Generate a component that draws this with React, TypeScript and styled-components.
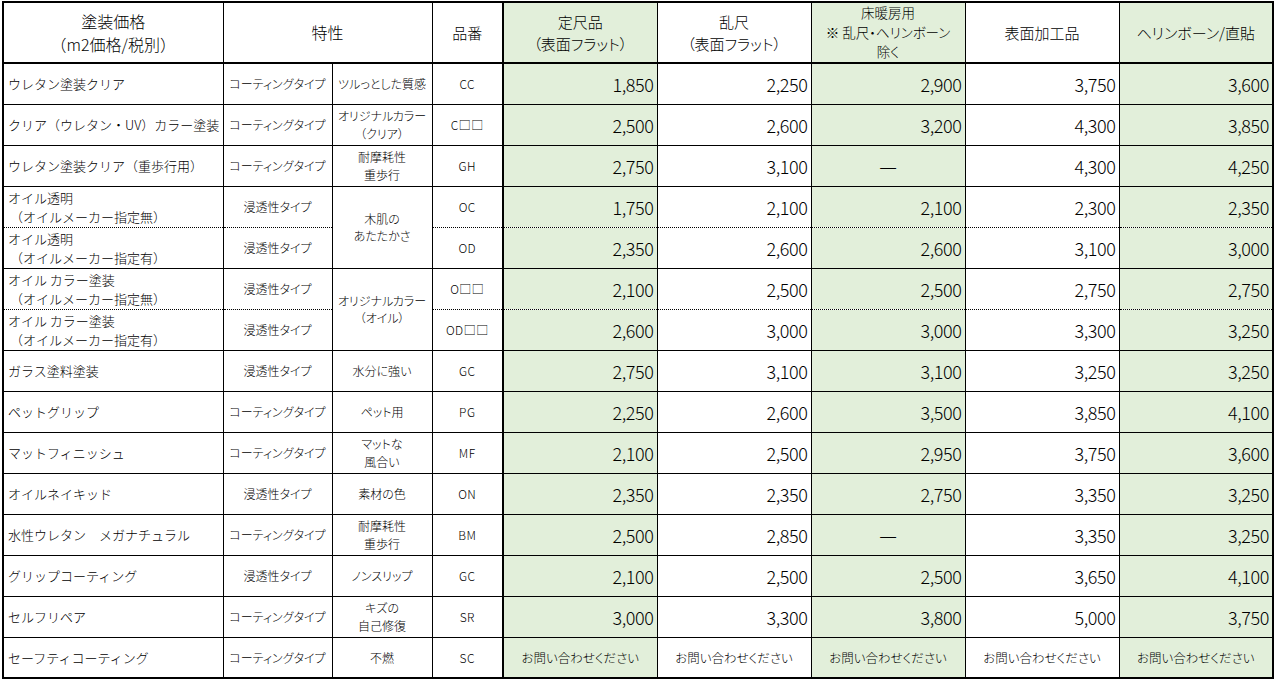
import React from "react";
import styled, { createGlobalStyle } from "styled-components";

const Global = createGlobalStyle`
  html, body { margin: 0; padding: 0; background: #ffffff; }
  body { font-family: "Noto Sans CJK JP", "Noto Sans", sans-serif; color: #000; }
`;

const GREEN = "#e2efda";

const Page = styled.div`
  padding: 1px 0 0 2px;
`;

const Table = styled.table`
  border-collapse: collapse;
  table-layout: fixed;
  width: 1270px;
  border: 2px solid #000;
  font-weight: 300;
`;

const Row = styled.tr`
  height: 41px;
`;

const HeadRow = styled.tr`
  height: 61px;
`;

const Cell = styled.td<{ $green?: boolean; $dotted?: boolean; $thickLeft?: boolean }>`
  border-right: 1px solid #000;
  border-bottom: 1px ${(p) => (p.$dotted ? "dotted" : "solid")} #000;
  ${(p) => (p.$thickLeft ? "border-left: 2px solid #000;" : "")}
  background: ${(p) => (p.$green ? GREEN : "#ffffff")};
  padding: 0 3px;
  vertical-align: middle;
  white-space: nowrap;
  overflow: hidden;
`;

const HeadCell = styled(Cell).attrs({ as: "th" })<{ $small?: boolean; $wide?: boolean }>`
  border-bottom: 2px solid #000;
  font-weight: 300;
  text-align: center;
  font-size: ${(p) => (p.$small ? "13.5px" : p.$wide ? "16px" : "15px")};
  line-height: ${(p) => (p.$small ? "19.5px" : p.$wide ? "23px" : "22px")};
  font-feature-settings: ${(p) => (p.$wide ? "normal" : '"palt"')};
`;

const NameCell = styled(Cell)`
  text-align: left;
  font-size: 13px;
  line-height: 19px;
  padding-left: 4px;
`;

const TypeCell = styled(Cell)`
  text-align: center;
  font-size: 12px;
  line-height: 17.5px;
  font-feature-settings: "palt";
`;

const CodeCell = styled(Cell)`
  text-align: center;
  font-size: 12px;
  letter-spacing: 0.5px;
`;

const PriceCell = styled(Cell)`
  text-align: right;
  font-size: 18px;
  padding-right: 3px;
  letter-spacing: -0.4px;
`;

const DashCell = styled(Cell)`
  text-align: center;
  font-size: 20px;
`;

const InquiryCell = styled(Cell)`
  text-align: center;
  font-size: 12.5px;
  font-feature-settings: "palt";
`;

const Line = styled.div``;

const Indent = styled.div`
  padding-left: 2px;
`;

type Price = number | null | "ask";

interface RowData {
  name: string[];
  type: string;
  feature?: string[];
  featureSpan?: number;
  code: string;
  prices: Price[];
  dotted?: boolean;
}

const rows: RowData[] = [
  { name: ["ウレタン塗装クリア"], type: "コーティングタイプ", feature: ["ツルっとした質感"], code: "CC", prices: [1850, 2250, 2900, 3750, 3600] },
  { name: ["クリア（ウレタン・UV）カラー塗装"], type: "コーティングタイプ", feature: ["オリジナルカラー", "（クリア）"], code: "C□□", prices: [2500, 2600, 3200, 4300, 3850] },
  { name: ["ウレタン塗装クリア（重歩行用）"], type: "コーティングタイプ", feature: ["耐摩耗性", "重歩行"], code: "GH", prices: [2750, 3100, null, 4300, 4250] },
  { name: ["オイル透明", "（オイルメーカー指定無）"], type: "浸透性タイプ", feature: ["木肌の", "あたたかさ"], featureSpan: 2, code: "OC", prices: [1750, 2100, 2100, 2300, 2350], dotted: true },
  { name: ["オイル透明", "（オイルメーカー指定有）"], type: "浸透性タイプ", code: "OD", prices: [2350, 2600, 2600, 3100, 3000] },
  { name: ["オイル カラー塗装", "（オイルメーカー指定無）"], type: "浸透性タイプ", feature: ["オリジナルカラー", "（オイル）"], featureSpan: 2, code: "O□□", prices: [2100, 2500, 2500, 2750, 2750], dotted: true },
  { name: ["オイル カラー塗装", "（オイルメーカー指定有）"], type: "浸透性タイプ", code: "OD□□", prices: [2600, 3000, 3000, 3300, 3250] },
  { name: ["ガラス塗料塗装"], type: "浸透性タイプ", feature: ["水分に強い"], code: "GC", prices: [2750, 3100, 3100, 3250, 3250] },
  { name: ["ペットグリップ"], type: "コーティングタイプ", feature: ["ペット用"], code: "PG", prices: [2250, 2600, 3500, 3850, 4100] },
  { name: ["マットフィニッシュ"], type: "コーティングタイプ", feature: ["マットな", "風合い"], code: "MF", prices: [2100, 2500, 2950, 3750, 3600] },
  { name: ["オイルネイキッド"], type: "浸透性タイプ", feature: ["素材の色"], code: "ON", prices: [2350, 2350, 2750, 3350, 3250] },
  { name: ["水性ウレタン　メガナチュラル"], type: "コーティングタイプ", feature: ["耐摩耗性", "重歩行"], code: "BM", prices: [2500, 2850, null, 3350, 3250] },
  { name: ["グリップコーティング"], type: "浸透性タイプ", feature: ["ノンスリップ"], code: "GC", prices: [2100, 2500, 2500, 3650, 4100] },
  { name: ["セルフリペア"], type: "コーティングタイプ", feature: ["キズの", "自己修復"], code: "SR", prices: [3000, 3300, 3800, 5000, 3750] },
  { name: ["セーフティコーティング"], type: "コーティングタイプ", feature: ["不燃"], code: "SC", prices: ["ask", "ask", "ask", "ask", "ask"] },
];

const greenCols = [true, false, true, false, true];

const fmt = (n: number) => n.toLocaleString("en-US");

function PriceCells({ prices, dotted }: { prices: Price[]; dotted?: boolean }) {
  return (
    <>
      {prices.map((p, i) => {
        const common = { $green: greenCols[i], $dotted: dotted, $thickLeft: i === 0 };
        if (p === null) return <DashCell key={i} {...common}>—</DashCell>;
        if (p === "ask") return <InquiryCell key={i} {...common}>お問い合わせください</InquiryCell>;
        return <PriceCell key={i} {...common}>{fmt(p)}</PriceCell>;
      })}
    </>
  );
}

export default function App() {
  return (
    <Page>
      <Global />
      <Table>
        <colgroup>
          <col style={{ width: 220 }} />
          <col style={{ width: 109 }} />
          <col style={{ width: 100 }} />
          <col style={{ width: 71 }} />
          <col style={{ width: 154 }} />
          <col style={{ width: 154 }} />
          <col style={{ width: 154 }} />
          <col style={{ width: 154 }} />
          <col style={{ width: 154 }} />
        </colgroup>
        <thead>
          <HeadRow>
            <HeadCell $wide>
              <Line>塗装価格</Line>
              <Line>（m2価格/税別）</Line>
            </HeadCell>
            <HeadCell colSpan={2} $wide>特性</HeadCell>
            <HeadCell>品番</HeadCell>
            <HeadCell $green $thickLeft>
              <Line>定尺品</Line>
              <Line>（表面フラット）</Line>
            </HeadCell>
            <HeadCell>
              <Line>乱尺</Line>
              <Line>（表面フラット）</Line>
            </HeadCell>
            <HeadCell $green $small>
              <Line>床暖房用</Line>
              <Line>※ 乱尺・ヘリンボーン</Line>
              <Line>除く</Line>
            </HeadCell>
            <HeadCell>表面加工品</HeadCell>
            <HeadCell $green>ヘリンボーン/直貼</HeadCell>
          </HeadRow>
        </thead>
        <tbody>
          {rows.map((r, idx) => (
            <Row key={idx}>
              <NameCell $dotted={r.dotted}>
                {r.name.map((n, i) => (i === 0 ? <Line key={i}>{n}</Line> : <Indent key={i}>{n}</Indent>))}
              </NameCell>
              <TypeCell $dotted={r.dotted}>{r.type}</TypeCell>
              {r.feature && (
                <TypeCell rowSpan={r.featureSpan ?? 1}>
                  {r.feature.map((f, i) => (
                    <Line key={i}>{f}</Line>
                  ))}
                </TypeCell>
              )}
              <CodeCell $dotted={r.dotted}>{r.code}</CodeCell>
              <PriceCells prices={r.prices} dotted={r.dotted} />
            </Row>
          ))}
        </tbody>
      </Table>
    </Page>
  );
}
